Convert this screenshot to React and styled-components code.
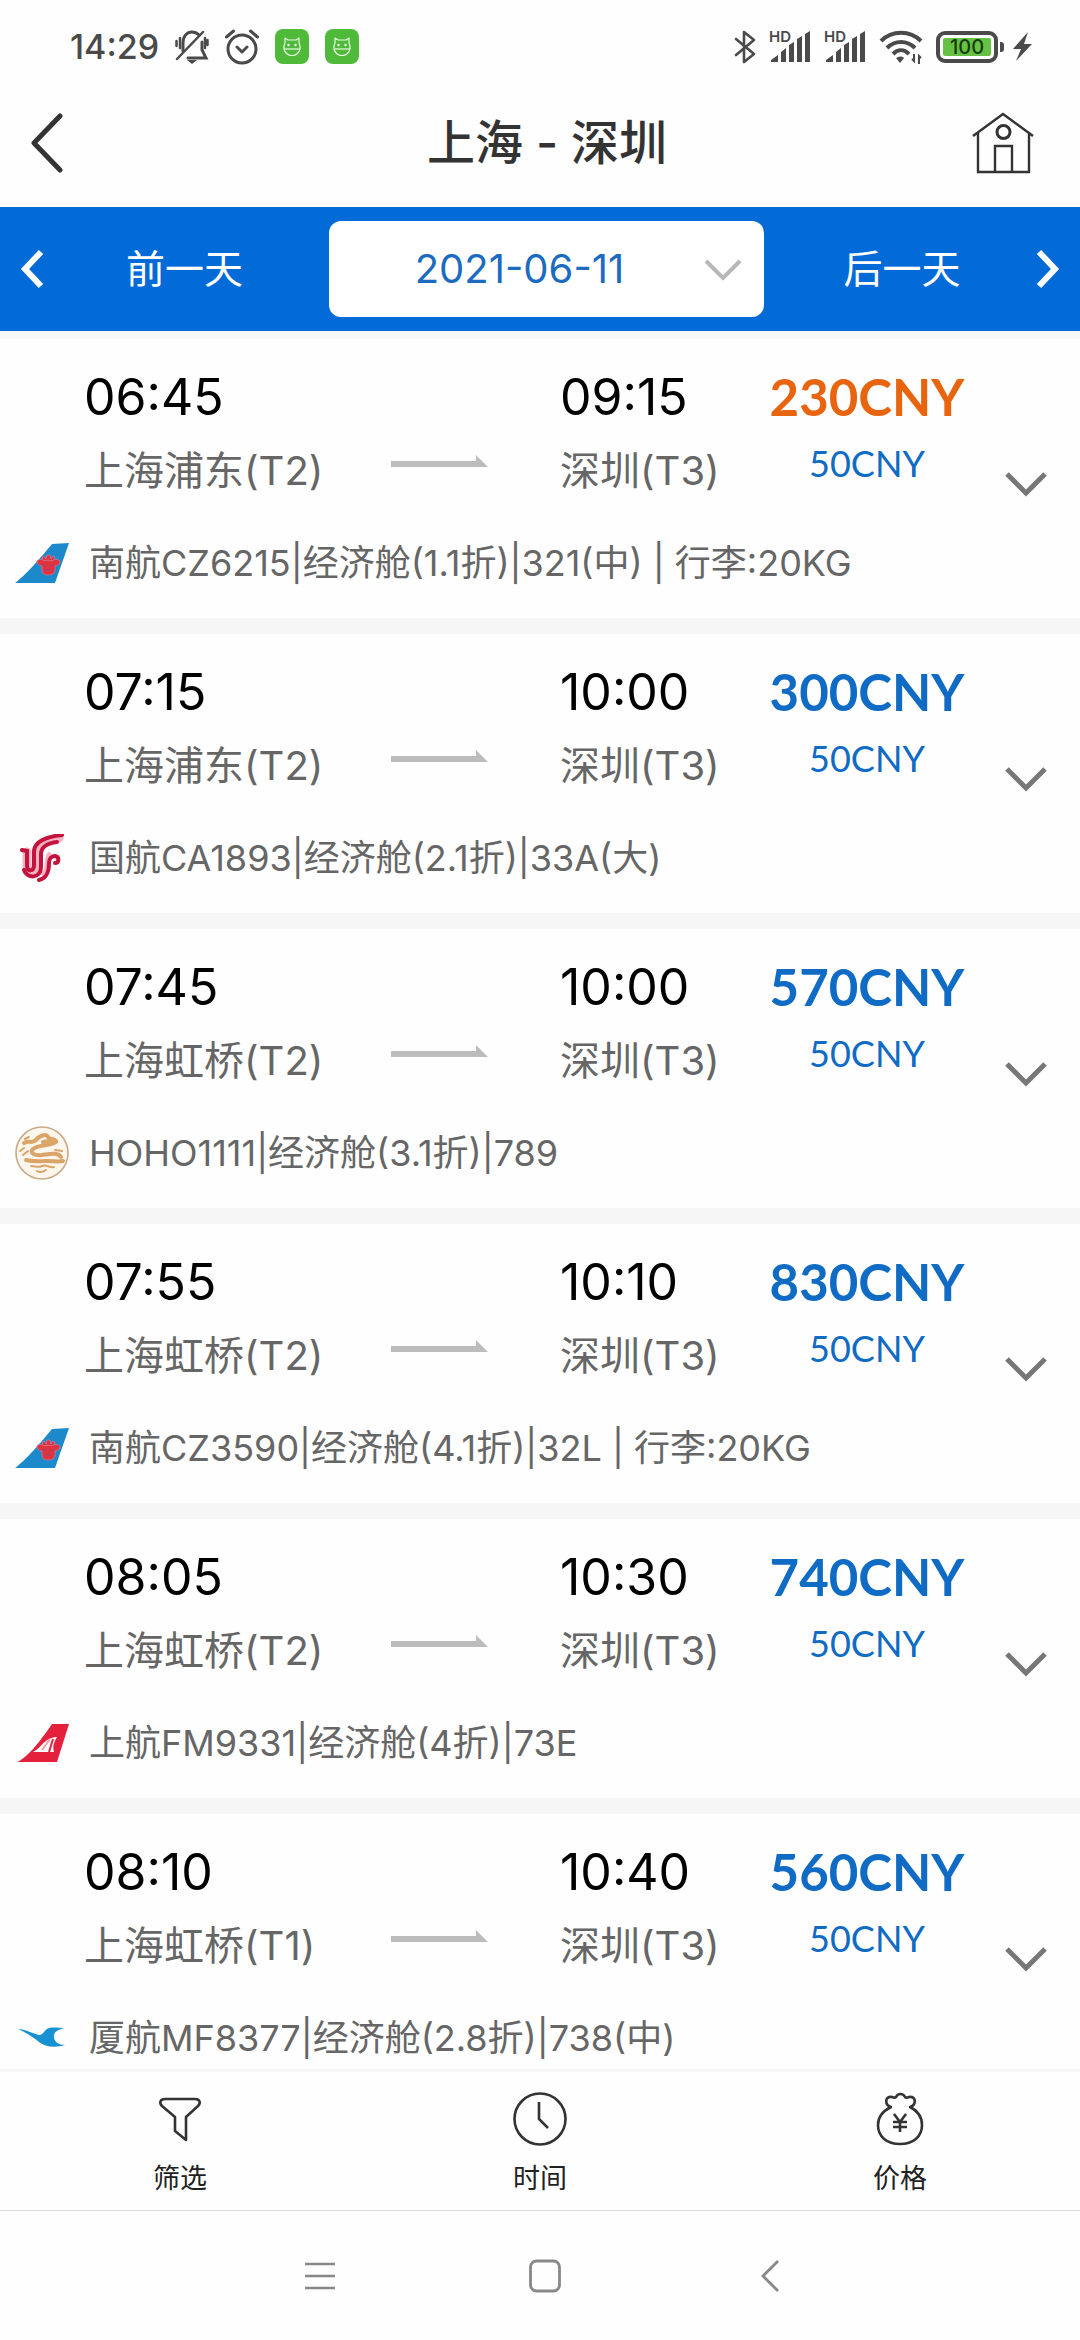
import React from "react";
import styled, { createGlobalStyle } from "styled-components";

const Global = createGlobalStyle`
  *, *::before, *::after { box-sizing: border-box; }
  body { margin: 0; background: #fefefe; }
  button, select { font: inherit; color: inherit; border: 0; padding: 0; margin: 0; background: none; cursor: pointer; }
`;

const Screen = styled.div`
  height: 100vh;
  display: flex;
  flex-direction: column;
  overflow: hidden;
  background: #fefefe;
  color: #333;
  font-family: Inter, "Noto Sans CJK SC", sans-serif;
`;

const StatusBar = styled.div`
  flex: none;
  height: 94px;
  padding: 0 48px 0 70px;
  display: flex;
  align-items: center;
  justify-content: space-between;
  color: #4a4a4a;
`;
const StatusGroup = styled.div`
  display: flex;
  align-items: center;
  gap: ${(p) => p.$gap}px;
`;
const Clock = styled.span`
  font-size: 34px;
  line-height: 40px;
  font-weight: 500;
`;
const Signal = styled.span`
  position: relative;
  display: flex;
`;
const HdMark = styled.span`
  position: absolute;
  left: 0;
  top: 0;
  font-size: 15px;
  line-height: 14px;
  font-weight: 600;
`;
const BatteryWrap = styled.span`
  display: flex;
  align-items: center;
  gap: 2px;
`;
const BatteryBody = styled.span`
  width: 62px;
  height: 32px;
  padding: 3px;
  border: 4px solid #4a4a4a;
  border-radius: 9px;
  display: flex;
`;
const BatteryFill = styled.span`
  flex: 1;
  background: #66c144;
  border-radius: 2px;
  color: #173c0c;
  font-size: 20px;
  line-height: 18px;
  font-weight: 500;
  text-align: center;
`;
const BatteryTip = styled.span`
  width: 4px;
  height: 10px;
  margin-right: 6px;
  border-radius: 0 3px 3px 0;
  background: #4a4a4a;
`;

const Header = styled.header`
  flex: none;
  height: 113px;
  padding: 0 46px 16px 30px;
  display: grid;
  grid-template-columns: 1fr auto 1fr;
  align-items: center;
`;
const Title = styled.h1`
  margin: 0;
  padding-left: 30px;
  font-size: 48px;
  line-height: 60px;
  font-weight: 500;
`;
const HeaderButton = styled.button`
  justify-self: ${(p) => p.$side};
  display: flex;
`;

const DateBar = styled.nav`
  flex: none;
  height: 124px;
  display: grid;
  grid-template-columns: 329fr 435fr 316fr;
  align-items: center;
  background: #026bd8;
  color: #fff;
  font-size: 39px;
  line-height: 56px;
`;
const DayButton = styled.button`
  height: 96px;
  padding: 0 20px;
  display: grid;
  grid-template-columns: ${(p) => (p.$next ? "1fr 24px" : "24px 1fr")};
  align-items: center;
`;
const DayLabel = styled.span`
  padding: ${(p) => (p.$next ? "0 16px 0 0" : "0 0 0 16px")};
  text-align: center;
`;
const DatePicker = styled.label`
  position: relative;
  display: block;
`;
const DateSelect = styled.select`
  appearance: none;
  display: block;
  width: 100%;
  height: 96px;
  padding-right: 54px;
  border-radius: 12px;
  background: #fff;
  color: #1b6cc0;
  font-size: 40px;
  text-align-last: center;
`;
const PickerArrow = styled.svg`
  position: absolute;
  right: 22px;
  top: 38px;
  pointer-events: none;
`;

const List = styled.main`
  flex: 1;
  min-height: 0;
  overflow: hidden;
  display: flex;
  flex-direction: column;
  border-top: 8px solid #f8f8f8;
`;
const Card = styled.article`
  flex: none;
  padding: 32px 0 27px;
  border-bottom: 16px solid #f6f6f6;
`;
const Route = styled.div`
  display: grid;
  grid-template-columns: 307fr 169fr 169fr 276fr 75fr;
  padding: 0 0 0 84px;
`;
const Stop = styled.div`
  display: grid;
  grid-template-rows: 52px 96px;
  align-items: center;
  white-space: nowrap;
`;
const Time = styled.time`
  color: #000;
  font-size: 50px;
  line-height: 52px;
`;
const Place = styled.span`
  color: #666;
  font-size: 40px;
  line-height: 56px;
`;
const RouteArrow = styled.svg`
  margin-top: 84px;
`;
const Fare = styled.div`
  display: grid;
  grid-template-rows: 52px 80px;
  align-items: center;
  justify-items: center;
  align-content: start;
  font-family: Lato, "Noto Sans CJK SC", sans-serif;
`;
const Price = styled.strong`
  color: ${(p) => (p.$best ? "#e8640f" : "#0f6bc4")};
  font-size: 51px;
  line-height: 52px;
  font-weight: 700;
`;
const Tax = styled.span`
  color: #0f6bc4;
  font-size: 36px;
  line-height: 44px;
`;
const Expand = styled.button`
  align-self: end;
  display: flex;
  height: 68px;
  align-items: center;
`;
const Info = styled.div`
  display: grid;
  grid-template-columns: 54px 1fr;
  gap: 20px;
  align-items: center;
  padding: 16px 14px 0 15px;
  height: 72px;
  color: #666;
  font-size: 36px;
  line-height: 56px;
  white-space: pre;
`;

const Tabs = styled.nav`
  flex: none;
  height: 142px;
  display: grid;
  grid-template-columns: repeat(3, 1fr);
  border-top: 3px solid #f6f6f6;
  border-bottom: 1px solid #d9dcdc;
`;
const Tab = styled.button`
  display: flex;
  flex-direction: column;
  align-items: center;
  padding-top: 19px;
  gap: 12px;
  color: #222;
  font-size: 27px;
  line-height: 40px;
`;
const SystemNav = styled.div`
  flex: none;
  height: 129px;
  padding-left: 10px;
  display: flex;
  justify-content: center;
  align-items: center;
  gap: 165px;
`;
const NavButton = styled.button`
  width: 60px;
  height: 60px;
  display: flex;
  align-items: center;
  justify-content: center;
`;

const BellOff = () => (
  <svg width="34" height="36" viewBox="0 0 34 36" fill="none" stroke="#4a4a4a" strokeWidth="3" strokeLinecap="round">
    <path d="M8 22V14C8 7 12 3 17 3c3 0 5 1 7 3M27 13v8l4 8H13" />
    <path d="M2 30 28 3M1.500 12v5M5 9v10M32.500 11v5M30 9v10" strokeWidth="2.500" />
    <path d="M12 31h10l-5 4z" fill="#4a4a4a" stroke="none" />
  </svg>
);
const Alarm = () => (
  <svg width="34" height="36" viewBox="0 0 34 36" fill="none" stroke="#4a4a4a" strokeWidth="3" strokeLinecap="round" strokeLinejoin="round">
    <circle cx="17" cy="20" r="14" />
    <path d="M12 18l5 5 5-5M1.500 8l7-6M32.500 8l-7-6" />
  </svg>
);
const AppBadge = () => (
  <svg width="34" height="36" viewBox="0 0 34 36" fill="none">
    <rect width="34" height="35" rx="8" fill="#4fb93a" />
    <g stroke="#eafbe4" strokeWidth="1.200" strokeLinejoin="round">
      <path d="M10 9l3 2h8l3-2v5c1 2 1.500 4 1 6-1 4-4 6.500-8 6.500S10 24 9 20c-.5-2 0-4 1-6z" />
      <path d="M9 20h16" />
    </g>
    <circle cx="13.500" cy="16" r="1.200" fill="#fff" />
    <circle cx="20.500" cy="16" r="1.200" fill="#fff" />
  </svg>
);
const Bluetooth = () => (
  <svg width="22" height="36" viewBox="0 0 22 36" fill="none" stroke="#4a4a4a" strokeWidth="2.600" strokeLinejoin="round" strokeLinecap="round">
    <path d="M2 10l18 15-10 8V3l10 8L2 26" />
  </svg>
);
const SignalBars = () => (
  <svg width="42" height="34" viewBox="0 0 42 34" fill="#4a4a4a">
    <path d="M2 32v-2l7-5v7zM12 22l5-4v14h-5zM20 15l5-3v20h-5zM28 9l5-3v26h-5zM36 4l5-3v31h-5z" />
  </svg>
);
const HdSignal = () => (
  <Signal>
    <SignalBars />
    <HdMark>HD</HdMark>
  </Signal>
);
const Wifi = () => (
  <svg width="44" height="36" viewBox="0 0 44 36" fill="none" stroke="#4a4a4a" strokeWidth="4">
    <path d="M2 12C13 1 31 1 42 12M8 19c8-8 20-8 28 0M14 25c5-5 11-5 16 0" />
    <path d="M17 29c3-2 6-2 8 0l-4 5z" fill="#4a4a4a" stroke="none" />
    <path d="M35 25v7l-2-2M40 35v-8l2 2" strokeWidth="2" />
  </svg>
);
const Bolt = () => (
  <svg width="20" height="30" viewBox="0 0 20 30" fill="#4a4a4a">
    <path d="M16 0 1 17h8L4 29 20 12h-8z" />
  </svg>
);
const Battery = () => (
  <BatteryWrap>
    <BatteryBody>
      <BatteryFill>100</BatteryFill>
    </BatteryBody>
    <BatteryTip />
    <Bolt />
  </BatteryWrap>
);

const BackIcon = () => (
  <svg width="34" height="60" viewBox="0 0 34 60" fill="none" stroke="#333" strokeWidth="5" strokeLinecap="round" strokeLinejoin="round">
    <path d="M30 3 4 30l26 27" />
  </svg>
);
const HomeIcon = () => (
  <svg width="62" height="62" viewBox="0 0 62 62" fill="none" stroke="#333" strokeWidth="2.400">
    <path d="M1 24 31 2l30 22M6 20v40h51V20M23 60V34h17v26" />
    <circle cx="31.500" cy="20" r="6.500" strokeWidth="3" />
  </svg>
);
const DayArrow = ({ d }) => (
  <svg width="24" height="40" viewBox="0 0 24 40" fill="none" stroke="#fff" strokeWidth="6">
    <path d={d} />
  </svg>
);
const ChevronDown = () => (
  <svg width="42" height="26" viewBox="0 0 42 26" fill="none" stroke="#777" strokeWidth="5">
    <path d="M2 2l19 19L40 2" />
  </svg>
);

const SouthernLogo = () => (
  <svg width="54" height="40" viewBox="0 0 54 40">
    <path d="M0 40C9 34 28 12 37 1l17-1-14 40z" fill="#1c8aca" />
    <g fill="#e2323c" stroke="#c97a9c" strokeWidth="0.800">
      <path d="M28 18l-1-4 2-1 2 3 1-4h3l1 4 2-3 2 1-1 4z" />
      <path d="M22 18c2-2 5-2 7 0 2-1 6-1 8 0 2-2 6-2 8 0 0 3-2 5-5 5v4c0 3-3 5-7 5s-6-2-6-5v-4c-3 0-5-2-5-5z" />
    </g>
    <path d="M27 21l4 2M39 21l-4 2M30 27h6" stroke="#8a4b84" strokeWidth="1" fill="none" />
  </svg>
);
const AirChinaLogo = () => (
  <svg width="54" height="48" viewBox="0 0 54 48" fill="none" strokeLinecap="round">
    <path d="M12 18v14c0 10 10 9 10-1V19C22 10 30 6 44 4" stroke="#f4b3c2" strokeWidth="9" />
    <path d="M28 40c6-5 2-14 6-20" stroke="#f4b3c2" strokeWidth="4" />
    <path d="M7 16l5 1v15c0 6 7 6 7-1V18C19 8 29 3 47 1" stroke="#c4133c" strokeWidth="4" />
    <path d="M9 36c3 9 17 9 17-3V20c0-7 7-11 16-12" stroke="#c4133c" strokeWidth="4" />
    <path d="M24 46c8-2 10-8 10-17 0-5 3-7 6-7 5 1 4 7 0 7" stroke="#c4133c" strokeWidth="4" />
  </svg>
);
const JuneyaoLogo = () => (
  <svg width="54" height="54" viewBox="0 0 54 54" fill="none" stroke="#dba468" strokeLinecap="round" strokeLinejoin="round">
    <circle cx="27" cy="27" r="26" fill="#fcf6ec" stroke="#c8ab87" strokeWidth="1.600" />
    <path d="M9 17c5-3 8 1 12-3 3-4 10-7 12-3s5 0 8 4c-4 3-9-1-13 1" strokeWidth="4" />
    <path d="M41 16c-9 5-17 2-23 7-4 4 2 7 9 6 8-1 16-3 19 2" strokeWidth="4" />
    <path d="M11 34c8 2 13 1 20 1 8 0 13 1 17 0" strokeWidth="4" />
    <path d="M16 40c5 0 7 2 11 0s7 2 12 1M22 45c3 2 6 1 9-1M5 25l4-3M8 29l5-4M40 24l7 1M10 13l4-2" strokeWidth="2" />
  </svg>
);
const ShanghaiLogo = () => (
  <svg width="54" height="40" viewBox="0 0 54 40">
    <path d="M2 39C14 34 28 14 37 1h17l-12 38z" fill="#e5203c" />
    <path d="M18 29c8-3 10-14 24-15-2 4-5 8-3 15z" fill="#fff" />
    <path d="M27 27l8-11" stroke="#f2a0aa" strokeWidth="2" />
    <path d="M34 29l4-13" stroke="#e5203c" strokeWidth="2" />
  </svg>
);
const XiamenLogo = () => (
  <svg width="54" height="24" viewBox="0 0 54 24">
    <path d="M3 3c8 0 17 6 22 6 4-1 5-6 9-7 6-1 11 0 16 0-6 1-12 4-11 9 0 5 5 8 11 8-10 3-20 2-26-3C18 11 10 6 3 3z" fill="#1791d2" />
  </svg>
);

const FilterIcon = () => (
  <svg width="56" height="56" viewBox="0 0 56 56" fill="none" stroke="#333" strokeWidth="2.600" strokeLinejoin="round">
    <path d="M13 8h30c5 0 6 4 3 7L34 26v23l-11-9V26L10 15C7 12 8 8 13 8z" />
  </svg>
);
const ClockIcon = () => (
  <svg width="56" height="56" viewBox="0 0 56 56" fill="none" stroke="#333" strokeWidth="2.600">
    <circle cx="28" cy="28" r="25.500" />
    <path d="M27 11v17l9 9" />
  </svg>
);
const MoneyIcon = () => (
  <svg width="56" height="56" viewBox="0 0 56 56" fill="none" stroke="#333" strokeWidth="2.600" strokeLinejoin="round">
    <path d="M19 16c-6-2-7-11 1-10 2 1 3 1 4 0 2-4 7-4 9 0 1 1 2 1 4 0 8-1 7 8 1 10 8 4 12 10 12 18 0 12-9 19-22 19S6 46 6 34c0-8 5-14 13-18z" />
    <path d="M22 23l6 8 6-8M28 31v10M21 31h14M21 36h14" />
  </svg>
);

const logos = {
  CZ: SouthernLogo,
  CA: AirChinaLogo,
  HO: JuneyaoLogo,
  FM: ShanghaiLogo,
  MF: XiamenLogo,
};

const flights = [
  { logo: "CZ", dep: "06:45", from: "上海浦东(T2)", arr: "09:15", price: "230CNY", best: true, info: "南航CZ6215|经济舱(1.1折)|321(中) | 行李:20KG" },
  { logo: "CA", dep: "07:15", from: "上海浦东(T2)", arr: "10:00", price: "300CNY", info: "国航CA1893|经济舱(2.1折)|33A(大)" },
  { logo: "HO", dep: "07:45", from: "上海虹桥(T2)", arr: "10:00", price: "570CNY", info: "HOHO1111|经济舱(3.1折)|789" },
  { logo: "CZ", dep: "07:55", from: "上海虹桥(T2)", arr: "10:10", price: "830CNY", info: "南航CZ3590|经济舱(4.1折)|32L | 行李:20KG" },
  { logo: "FM", dep: "08:05", from: "上海虹桥(T2)", arr: "10:30", price: "740CNY", info: "上航FM9331|经济舱(4折)|73E" },
  { logo: "MF", dep: "08:10", from: "上海虹桥(T1)", arr: "10:40", price: "560CNY", info: "厦航MF8377|经济舱(2.8折)|738(中)" },
];

function Flight({ flight }) {
  const Logo = logos[flight.logo];
  return (
    <Card>
      <Route>
        <Stop>
          <Time>{flight.dep}</Time>
          <Place>{flight.from}</Place>
        </Stop>
        <RouteArrow width="98" height="12" viewBox="0 0 98 12" fill="#bcbcbc">
          <path d="M0 6h85V0l12 12H0z" />
        </RouteArrow>
        <Stop>
          <Time>{flight.arr}</Time>
          <Place>深圳(T3)</Place>
        </Stop>
        <Fare>
          <Price $best={flight.best}>{flight.price}</Price>
          <Tax>50CNY</Tax>
        </Fare>
        <Expand aria-label="展开">
          <ChevronDown />
        </Expand>
      </Route>
      <Info>
        <Logo />
        <span>{flight.info}</span>
      </Info>
    </Card>
  );
}

export default function App() {
  return (
    <Screen>
      <Global />
      <StatusBar>
        <StatusGroup $gap={16}>
          <Clock>14:29</Clock>
          <BellOff />
          <Alarm />
          <AppBadge />
          <AppBadge />
        </StatusGroup>
        <StatusGroup $gap={13}>
          <Bluetooth />
          <HdSignal />
          <HdSignal />
          <Wifi />
          <Battery />
        </StatusGroup>
      </StatusBar>
      <Header>
        <HeaderButton $side="start" aria-label="返回">
          <BackIcon />
        </HeaderButton>
        <Title>上海 - 深圳</Title>
        <HeaderButton $side="end" aria-label="首页">
          <HomeIcon />
        </HeaderButton>
      </Header>
      <DateBar>
        <DayButton>
          <DayArrow d="M21 3 5 20l16 17" />
          <DayLabel>前一天</DayLabel>
        </DayButton>
        <DatePicker>
          <DateSelect aria-label="出发日期" defaultValue="2021-06-11">
            <option>2021-06-11</option>
          </DateSelect>
          <PickerArrow width="38" height="22" viewBox="0 0 38 22" fill="none" stroke="#b8b8b8" strokeWidth="4">
            <path d="M2 2l17 17L36 2" />
          </PickerArrow>
        </DatePicker>
        <DayButton $next>
          <DayLabel $next>后一天</DayLabel>
          <DayArrow d="M3 3l16 17L3 37" />
        </DayButton>
      </DateBar>
      <List>
        {flights.map((f) => (
          <Flight key={f.dep} flight={f} />
        ))}
      </List>
      <Tabs>
        <Tab>
          <FilterIcon />
          筛选
        </Tab>
        <Tab>
          <ClockIcon />
          时间
        </Tab>
        <Tab>
          <MoneyIcon />
          价格
        </Tab>
      </Tabs>
      <SystemNav>
        <NavButton aria-label="任务">
          <svg width="30" height="30" viewBox="0 0 30 30" stroke="#888" strokeWidth="2.600">
            <path d="M0 3h30M0 15h30M0 27h30" />
          </svg>
        </NavButton>
        <NavButton aria-label="主屏幕">
          <svg width="32" height="34" viewBox="0 0 32 34" fill="none" stroke="#888" strokeWidth="2.800">
            <rect x="1.500" y="2" width="29" height="30" rx="6" />
          </svg>
        </NavButton>
        <NavButton aria-label="后退">
          <svg width="18" height="34" viewBox="0 0 18 34" fill="none" stroke="#888" strokeWidth="2.800">
            <path d="M17 2 2 17l15 15" />
          </svg>
        </NavButton>
      </SystemNav>
    </Screen>
  );
}
